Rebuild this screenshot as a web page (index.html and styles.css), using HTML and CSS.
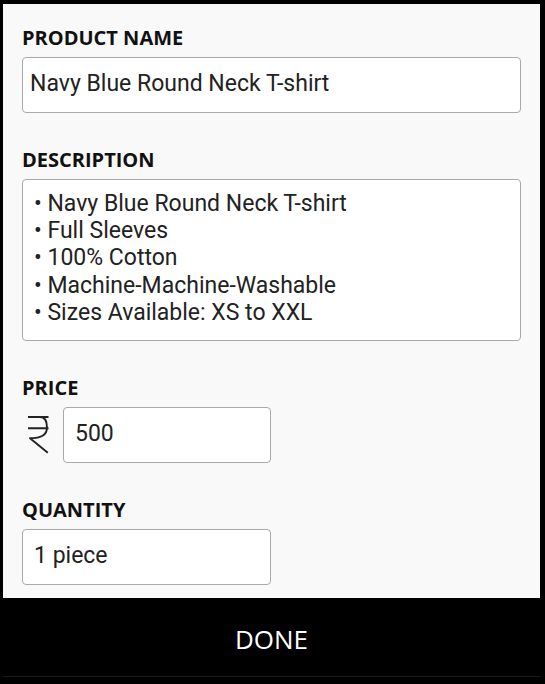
FILE: index.html
```html
<!DOCTYPE html>
<html lang="en">
<head>
<meta charset="utf-8">
<title>Edit product</title>
<link rel="stylesheet" href="styles.css">
</head>
<body>
<div class="app">
  <main class="panel">
    <section class="group">
      <div class="label">PRODUCT NAME</div>
      <div class="field field-name">Navy Blue Round Neck T-shirt</div>
    </section>
    <section class="group">
      <div class="label">DESCRIPTION</div>
      <div class="field field-desc">
        <div>• Navy Blue Round Neck T-shirt</div>
        <div>• Full Sleeves</div>
        <div>• 100% Cotton</div>
        <div>• Machine-Machine-Washable</div>
        <div>• Sizes Available: XS to XXL</div>
      </div>
    </section>
    <section class="group">
      <div class="label">PRICE</div>
      <div class="price-row">
        <svg class="rupee" width="28" height="40" viewBox="0 0 28 40" aria-label="₹">
          <path d="M6 2H26.5M6 13.3H26.5M18 2C23.5 2 25 6.5 25 12.5C25 19.5 19.5 23.3 8 23.3L25.8 37.8" fill="none" stroke="#222" stroke-width="1.9" stroke-linejoin="round"/>
        </svg>
        <div class="field field-price">500</div>
      </div>
    </section>
    <section class="group">
      <div class="label">QUANTITY</div>
      <div class="field field-qty">1 piece</div>
    </section>
  </main>
  <footer class="done-bar">DONE</footer>
</div>
</body>
</html>
```
FILE: styles.css
```css
* { box-sizing: border-box; }
html, body { margin: 0; padding: 0; background: #000; }
body { width: 545px; height: 684px; overflow: hidden; }

.app {
  height: 684px;
  display: flex;
  flex-direction: column;
  padding: 4px 5px 0 3px;
}

.panel {
  flex: 0 0 594px;
  background: #f9f9f9;
  padding: 22px 19px 0 19px;
  display: flex;
  flex-direction: column;
  gap: 35px;
  overflow: hidden;
}

.group { display: flex; flex-direction: column; }

.label {
  font-family: "Open Sans", "Noto Sans", sans-serif;
  font-weight: 700;
  font-size: 20px;
  line-height: 24px;
  color: #111;
  margin-bottom: 7px;
}

.field {
  background: #fff;
  border: 1px solid #a9a9a9;
  border-radius: 4px;
  font-family: Roboto, "Liberation Sans", sans-serif;
  font-size: 23px;
  color: #222;
}

.field-name, .field-price, .field-qty {
  height: 56px;
  line-height: 27px;
  display: flex;
  align-items: center;
  padding-bottom: 4px;
}

.field-name { padding-left: 7px; }

.field-desc {
  height: 162px;
  line-height: 27.4px;
  padding: 9.5px 10px 0 11px;
}

.price-row {
  display: flex;
  align-items: center;
  gap: 13px;
}

.rupee { flex: 0 0 auto; display: block; }

.field-price { width: 208px; padding-left: 11px; }
.field-qty { width: 249px; padding-left: 11px; }

.done-bar {
  flex: 0 0 79px;
  background: #000;
  color: #fff;
  font-family: "Open Sans", "Noto Sans", sans-serif;
  font-size: 26px;
  display: flex;
  align-items: center;
  justify-content: center;
  padding-top: 4px;
  border-bottom: 1px solid #1a1a1a;
}
```
